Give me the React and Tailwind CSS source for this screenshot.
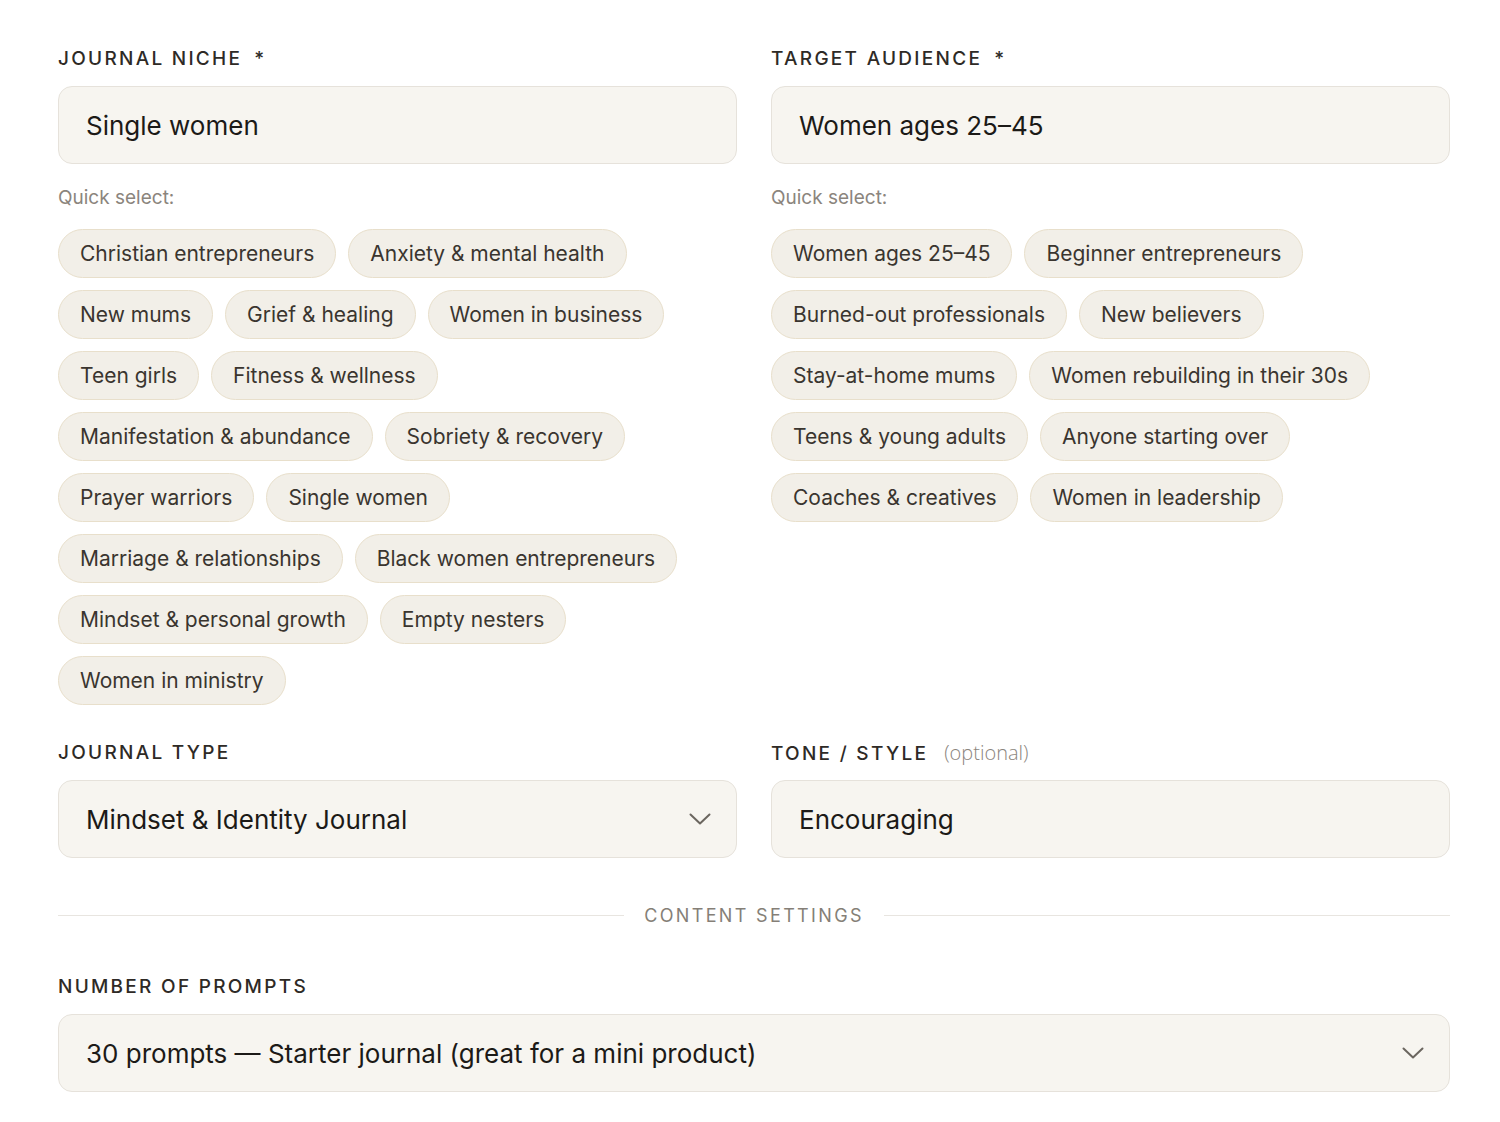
const niches = [
  "Christian entrepreneurs",
  "Anxiety & mental health",
  "New mums",
  "Grief & healing",
  "Women in business",
  "Teen girls",
  "Fitness & wellness",
  "Manifestation & abundance",
  "Sobriety & recovery",
  "Prayer warriors",
  "Single women",
  "Marriage & relationships",
  "Black women entrepreneurs",
  "Mindset & personal growth",
  "Empty nesters",
  "Women in ministry",
];

const audiences = [
  "Women ages 25–45",
  "Beginner entrepreneurs",
  "Burned-out professionals",
  "New believers",
  "Stay-at-home mums",
  "Women rebuilding in their 30s",
  "Teens & young adults",
  "Anyone starting over",
  "Coaches & creatives",
  "Women in leadership",
];

function Chevron() {
  return (
    <svg width="22" height="12" viewBox="0 0 22 12" fill="none" className="text-[#6b665f]">
      <path d="M1.5 1.5 11 10.5 20.5 1.5" stroke="currentColor" strokeWidth="2" strokeLinecap="round" strokeLinejoin="round" />
    </svg>
  );
}

function Label({ children, extra }) {
  return (
    <div className="flex h-[19px] items-baseline gap-3 text-[19px] font-medium uppercase tracking-[0.12em] text-[#2e2a26] leading-none">
      <span>{children}</span>
      {extra}
    </div>
  );
}

function Field({ value, select }) {
  return (
    <div className="mt-[18px] flex h-[78px] items-center justify-between rounded-[14px] border border-[#e6e2db] bg-[#f7f5f0] pl-[27px] pr-[25px] text-[26px] text-[#1c1a17]">
      <span>{value}</span>
      {select && <Chevron />}
    </div>
  );
}

function Pills({ items }) {
  return (
    <>
      <div className="mt-[24px] text-[19px] text-[#8b857d] leading-none">Quick select:</div>
      <div className="mt-[22px] flex flex-wrap gap-x-[12px] gap-y-[12px]">
        {items.map((t) => (
          <button
            key={t}
            className="flex h-[49px] items-center rounded-full border border-[#e8dfcb] bg-[#f2efe8] px-[21px] text-[21px] text-[#3a352f]"
          >
            {t}
          </button>
        ))}
      </div>
    </>
  );
}

export default function App() {
  return (
    <div className="min-h-screen bg-white pl-[58px] pr-[50px] pt-[49px] pb-10" style={{ fontFamily: "Inter, 'Noto Sans', sans-serif" }}>
      <div className="grid grid-cols-2 gap-x-[34px]">
        <div>
          <Label extra={<span className="tracking-normal">*</span>}>Journal Niche</Label>
          <Field value="Single women" />
          <Pills items={niches} />
        </div>
        <div>
          <Label extra={<span className="tracking-normal">*</span>}>Target Audience</Label>
          <Field value="Women ages 25–45" />
          <Pills items={audiences} />
        </div>
      </div>

      <div className="mt-[38px] grid grid-cols-2 gap-x-[34px]">
        <div>
          <Label>Journal Type</Label>
          <Field value="Mindset & Identity Journal" select />
        </div>
        <div>
          <Label
            extra={
              <span className="ml-1 normal-case tracking-normal font-light text-[20px] leading-[19px] text-[#8b857d]" style={{ fontFamily: "'Open Sans', sans-serif" }}>
                (optional)
              </span>
            }
          >
            Tone / Style
          </Label>
          <Field value="Encouraging" />
        </div>
      </div>

      <div className="mt-[44px] flex items-center gap-5">
        <div className="h-px flex-1 bg-[#e8e5e0]" />
        <span className="text-[18px] uppercase tracking-[0.13em] text-[#857f77]">Content Settings</span>
        <div className="h-px flex-1 bg-[#e8e5e0]" />
      </div>

      <div className="mt-[48px]">
        <Label>Number of Prompts</Label>
        <Field value="30 prompts — Starter journal (great for a mini product)" select />
      </div>
    </div>
  );
}
